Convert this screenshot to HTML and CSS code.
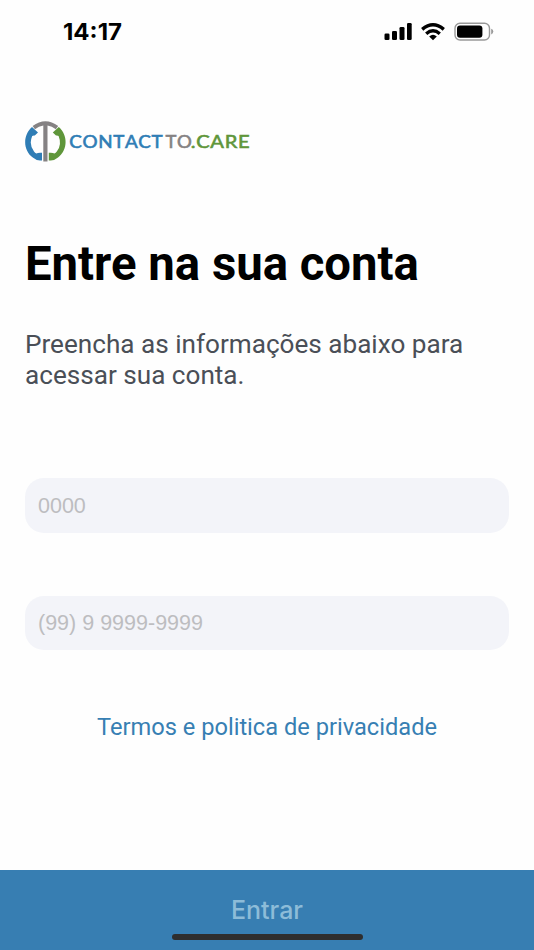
FILE: index.html
```html
<!DOCTYPE html>
<html lang="pt-BR">
<head>
    <meta charset="UTF-8">
    <meta name="viewport" content="width=device-width, initial-scale=1.0">
    <title>Contact To Care</title>
    <link rel="stylesheet" href="styles.css">
</head>
<body>

    <div class="status-bar">
        <svg width="534" height="64" viewBox="0 0 534 64">
            <text class="time" x="63" y="40" textLength="59" lengthAdjust="spacingAndGlyphs">14:17</text>
            <!-- Sinal -->
            <rect x="384.5" y="33.5" width="5" height="6.5" rx="1.3"/>
            <rect x="392" y="31" width="5" height="9" rx="1.3"/>
            <rect x="399.5" y="27" width="5" height="13" rx="1.3"/>
            <rect x="407" y="23" width="4.7" height="17" rx="1.3"/>
            <!-- Wifi -->
            <g fill="none" stroke="#000" stroke-width="3.4">
                <path d="M422.2 29.4Q433 20.2 443.8 29.4"/>
                <path d="M426.2 33.7Q433 27.8 439.8 33.7"/>
            </g>
            <path d="M429.2 36.4Q433 33.2 436.8 36.4L433 40.2Z"/>
            <!-- Bateria -->
            <rect x="455" y="23.2" width="34.5" height="16.8" rx="5" fill="none" stroke="#999" stroke-width="1.4"/>
            <rect x="457" y="25.4" width="25.4" height="12.4" rx="3"/>
            <path d="M491.2 28.8Q493.3 29.4 493.3 31.6T491.2 34.4Z" fill="#999"/>
        </svg>
    </div>

    <main class="container">
        <svg class="logo" width="226" height="42" viewBox="0 0 226 42">
            <!-- Fones -->
            <path fill="#2f7db5" d="M7 6L13 11.6L9.8 14.6Q8.2 14.4 7.2 14.9Q3.6 23.5 9 30.6Q10 32.2 11.4 32.6Q13 31.4 17 31.8V39.4Q12 40.3 7.8 36.6C-2.5 28.5-2 14 7 6Z"/>
            <path fill="#5f963a" d="M33.8 6L27.8 11.6L31 14.6Q32.6 14.4 33.6 14.9Q37.2 23.5 31.8 30.6Q30.8 32.2 29.4 32.6Q27.8 31.4 23.8 31.8V39.4Q28.8 40.3 33 36.6C43.3 28.5 42.8 14 33.8 6Z"/>
            <path fill="#858283" d="M7.6 5Q20.4-4.4 33.2 5L30.8 8.2Q27 5 22.5 4.5V40.4H18.3V4.5Q13.8 5 10 8.2Z"/>
            <text class="logo-contact" x="44.3" y="27" textLength="94" lengthAdjust="spacingAndGlyphs">CONTACT</text>
            <text class="logo-to" x="140.5" y="27" textLength="27" lengthAdjust="spacingAndGlyphs">TO</text>
            <text class="logo-care" x="165.8" y="27" textLength="59.5" lengthAdjust="spacingAndGlyphs">.CARE</text>
        </svg>

        <h1>Entre na sua conta</h1>
        <p class="intro">Preencha as informações abaixo para acessar sua conta.</p>

        <input class="field" type="text" placeholder="0000" aria-label="Código">
        <input class="field" type="tel" placeholder="(99) 9 9999-9999" aria-label="Telefone">

        <a class="terms" href="#">Termos e politica de privacidade</a>
    </main>

    <button class="submit">
        <span class="submit-text">Entrar</span>
        <span class="home-indicator"></span>
    </button>

</body>
</html>
```

FILE: styles.css
```css
* {
    box-sizing: border-box;
}

body {
    font-family: Roboto, sans-serif;
    margin: 0;
    height: 950px;
    display: flex;
    flex-direction: column;
    background-color: #fefefe;
    overflow: hidden;
}

.status-bar {
    height: 64px;
}

.status-bar svg,
.logo {
    display: block;
}

.time {
    font-family: Inter, sans-serif;
    font-size: 22.5px;
    font-weight: 700;
}

.container {
    flex: 1;
    display: flex;
    flex-direction: column;
    padding: 57px 25px 0;
}

.logo text {
    font-family: Lato, sans-serif;
    font-size: 18px;
    font-weight: 400;
    font-kerning: none;
    letter-spacing: 0.6px;
    stroke-width: 0.6px;
}

.logo .logo-contact {
    fill: #2f7db5;
    stroke: #2f7db5;
}

.logo .logo-to {
    fill: #858283;
    stroke: #858283;
}

.logo .logo-care {
    fill: #5f963a;
    stroke: #5f963a;
}

h1 {
    margin: 73px 0 0;
    font-size: 47.3px;
    line-height: 56px;
    font-weight: 700;
    color: #000;
    white-space: nowrap;
}

.intro {
    margin: 37px 0 87px;
    font-size: 26.13px;
    line-height: 31px;
    color: #4a4f57;
}

.field {
    width: 484px;
    height: 54.5px;
    margin: 0 0 63px;
    padding: 2px 13px 0;
    border: none;
    border-radius: 19px;
    background-color: #f3f4f9;
    font-family: "Liberation Sans", sans-serif;
    font-size: 21.5px;
}

.field::placeholder {
    color: #bdbdc0;
}

.terms {
    align-self: center;
    font-size: 23.65px;
    line-height: 28px;
    color: #377fb3;
    text-decoration: none;
}

.submit {
    height: 80px;
    padding: 25px 0 0;
    border: none;
    background-color: #377eb2;
    display: flex;
    flex-direction: column;
    align-items: center;
}

.submit-text {
    font-family: Inter, sans-serif;
    font-size: 25px;
    font-weight: 500;
    line-height: 30px;
    color: #8dbcd8;
}

.home-indicator {
    width: 191px;
    height: 6px;
    margin-top: 9px;
    border-radius: 3px;
    background-color: #2e2e2e;
}
```
